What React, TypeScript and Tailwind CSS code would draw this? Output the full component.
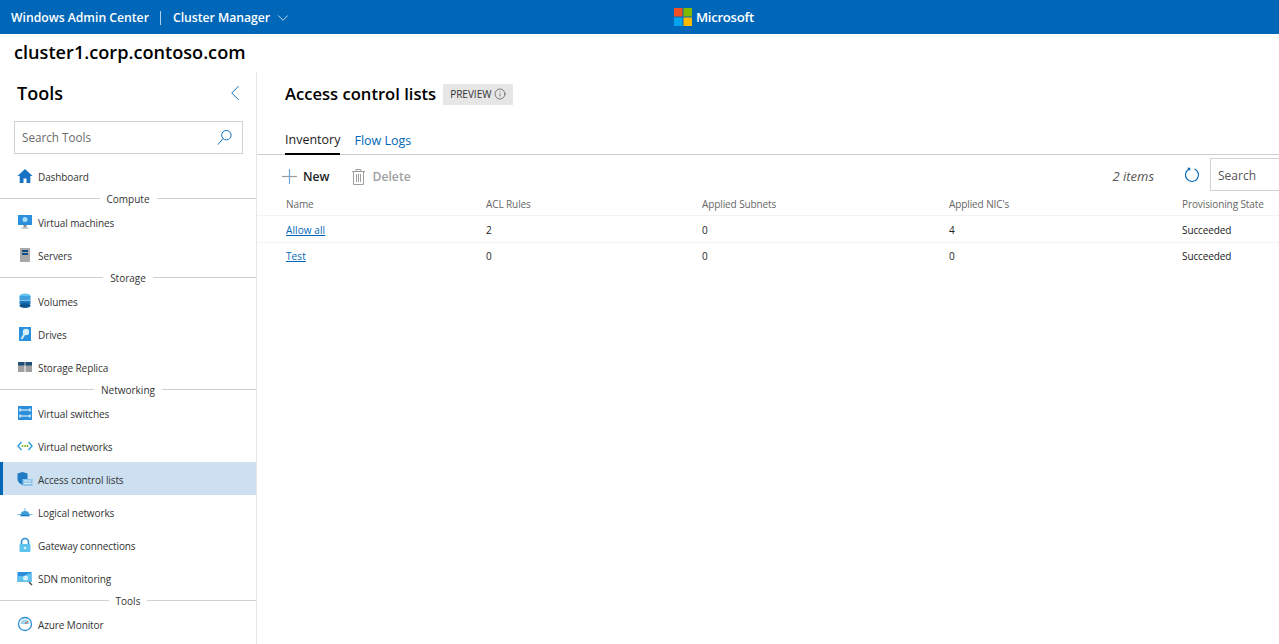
import React from 'react';
import { ChevronDown, ChevronLeft, Info } from 'lucide-react';

function HomeIcon() {
  return (
    <svg viewBox="0 0 16 16" className="w-[16px] h-[16px]">
      <path d="M8 1 0.500 8h2.200v7h3.800v-4.500h3V15h3.800V8h2.200z" fill="#1773c4" />
    </svg>
  );
}

function VmIcon() {
  return (
    <svg viewBox="0 0 16 16" className="w-[16px] h-[16px]">
      <rect x="1" y="1" width="14" height="10" fill="#2a8fdc" />
      <circle cx="8" cy="5.500" r="2.500" fill="#a9def5" />
      <rect x="6.500" y="11" width="3" height="2.500" fill="#8c8c8c" />
      <rect x="4.500" y="13.500" width="7" height="1.200" fill="#b5b5b5" />
    </svg>
  );
}

function ServerIcon() {
  return (
    <svg viewBox="0 0 16 16" className="w-[16px] h-[16px]">
      <rect x="3" y="1" width="10" height="14" fill="#a8a8a8" />
      <rect x="5" y="3" width="6" height="2" fill="#0b4f86" />
      <rect x="5" y="6" width="6" height="2" fill="#0b4f86" />
    </svg>
  );
}

function VolumeIcon() {
  return (
    <svg viewBox="0 0 16 16" className="w-[16px] h-[16px]">
      <ellipse cx="8" cy="3" rx="5.500" ry="2.500" fill="#62c2ee" />
      <rect x="2.500" y="3" width="11" height="4" fill="#3ea3e0" />
      <rect x="2.500" y="7.500" width="11" height="3.500" fill="#1a7ac0" />
      <ellipse cx="8" cy="12.500" rx="5.500" ry="2.500" fill="#0c568f" />
    </svg>
  );
}

function DriveIcon() {
  return (
    <svg viewBox="0 0 16 16" className="w-[16px] h-[16px]">
      <rect x="2" y="1" width="12" height="14" fill="#2a8fdc" />
      <circle cx="9" cy="6" r="3.200" fill="#d4eefa" />
      <path d="M7.500 8 4.500 13" stroke="#d4eefa" strokeWidth="2" />
    </svg>
  );
}

function ReplicaIcon() {
  return (
    <svg viewBox="0 0 16 16" className="w-[16px] h-[16px]">
      <rect x="1" y="3" width="6.500" height="10" fill="#a0a0a0" />
      <rect x="8.500" y="3" width="6.500" height="10" fill="#a0a0a0" />
      <rect x="1" y="3" width="6.500" height="3.500" fill="#1f4e79" />
      <rect x="8.500" y="3" width="6.500" height="3.500" fill="#1f4e79" />
    </svg>
  );
}

function SwitchIcon() {
  return (
    <svg viewBox="0 0 16 16" className="w-[16px] h-[16px]">
      <rect x="1" y="1" width="14" height="14" fill="#2a8fdc" />
      <path d="M3 5h10M3 11h10M3 3.500v3M13 3.500v3M3 9.500v3M13 9.500v3" stroke="#fff" strokeWidth="1.200" />
    </svg>
  );
}

function VnetIcon() {
  return (
    <svg viewBox="0 0 16 16" className="w-[16px] h-[16px]" fill="none">
      <path d="M4.500 4 1 8l3.500 4" stroke="#2d9fd9" strokeWidth="1.400" />
      <path d="M11.500 4 15 8l-3.500 4" stroke="#2d9fd9" strokeWidth="1.400" />
      <circle cx="5.500" cy="8" r="0.900" fill="#6bb400" />
      <circle cx="8" cy="8" r="0.900" fill="#6bb400" />
      <circle cx="10.500" cy="8" r="0.900" fill="#6bb400" />
    </svg>
  );
}

function AclIcon() {
  return (
    <svg viewBox="0 0 16 16" className="w-[16px] h-[16px]">
      <path d="M0.500 2.500 5.500 1l5 1.500V8c0 3-2.500 5-5 6-2.500-1-5-3-5-6z" fill="#1f7cc4" />
      <rect x="5.500" y="8" width="10" height="7" fill="#8fc3ea" />
      <path d="M7 10h7M7 12.500h7" stroke="#e3f1fb" strokeWidth="0.900" />
    </svg>
  );
}

function LogicalIcon() {
  return (
    <svg viewBox="0 0 16 16" className="w-[16px] h-[16px]">
      <path d="M0.500 10.500h15" stroke="#64b5e3" strokeWidth="0.900" />
      <path d="M4 10a4 3 0 0 1 8 0z" fill="#3a9fda" />
      <rect x="3.500" y="10.500" width="9" height="1.800" fill="#1a7ac0" />
      <path d="M8 4v3" stroke="#64b5e3" strokeWidth="1" />
    </svg>
  );
}

function GatewayIcon() {
  return (
    <svg viewBox="0 0 16 16" className="w-[16px] h-[16px]">
      <path d="M4.500 8V5a3.500 3.500 0 0 1 7 0v3" fill="none" stroke="#2a8fdc" strokeWidth="1.600" />
      <rect x="2.500" y="7" width="11" height="8" rx="1" fill="#5cc3ee" />
      <circle cx="8" cy="11" r="1.300" fill="#d9f1fb" />
    </svg>
  );
}

function MonitorIcon() {
  return (
    <svg viewBox="0 0 16 16" className="w-[16px] h-[16px]">
      <rect x="0.500" y="2" width="14" height="10" fill="#2a8fdc" />
      <path d="M0.500 7c3-3 6 1 9-2s3-1 5-1v8H0.500z" fill="#62c2ee" />
      <circle cx="8.500" cy="8" r="2.500" fill="#d9f1fb" />
      <path d="m12 12 3 3" stroke="#3c3c3c" strokeWidth="1.200" />
    </svg>
  );
}

function AzureMonitorIcon() {
  return (
    <svg viewBox="0 0 16 16" className="w-[16px] h-[16px]" fill="none">
      <circle cx="8" cy="8" r="6.500" stroke="#2b8fd4" strokeWidth="1.300" />
      <path d="M3.500 8a4.500 4.500 0 0 1 9 0z" fill="#9bd3f0" />
      <path d="m8 8 3-2.500" stroke="#c0392b" strokeWidth="1" />
    </svg>
  );
}

function MsLogo() {
  return (
    <svg viewBox="0 0 18 18" className="w-[18px] h-[18px]">
      <rect width="8.500" height="8.500" fill="#f25022" />
      <rect x="9.500" width="8.500" height="8.500" fill="#7fba00" />
      <rect y="9.500" width="8.500" height="8.500" fill="#00a4ef" />
      <rect x="9.500" y="9.500" width="8.500" height="8.500" fill="#ffb900" />
    </svg>
  );
}

function SearchGlass() {
  return (
    <svg viewBox="0 0 16 18" className="w-[15px] h-[17px]" fill="none" stroke="#0067b8" strokeWidth="1">
      <circle cx="10" cy="6.500" r="5" />
      <path d="M6.500 10 1 16.500" />
    </svg>
  );
}

function PlusThin() {
  return (
    <svg viewBox="0 0 15 15" className="w-[15px] h-[15px]" fill="none" strokeWidth="1.200">
      <path d="M0 7.500h15" stroke="#9a9a9a" />
      <path d="M7.500 0v15" stroke="#6ea6d8" />
    </svg>
  );
}

function TrashThin() {
  return (
    <svg viewBox="0 0 13 16" className="w-[13px] h-[16px]" fill="none" stroke="#9e9e9e" strokeWidth="1">
      <path d="M0 2.500h13M4 2.500V.5h5v2M1.500 2.500v13h10v-13M4.500 5v8M6.500 5v8M8.500 5v8" />
    </svg>
  );
}

function RefreshThin() {
  return (
    <svg viewBox="0 0 16 16" className="w-[16px] h-[16px]" fill="none" stroke="#0067b8" strokeWidth="1.100">
      <path d="M5 2.200A6.500 6.500 0 1 0 10.500 2" />
      <path d="M3 .8h3.200V4z" fill="#0067b8" stroke="none" />
    </svg>
  );
}

type NavEntry = { section: string } | { label: string; icon: React.ReactNode; active?: boolean };

const navItems: NavEntry[] = [
  { label: 'Dashboard', icon: <HomeIcon /> },
  { section: 'Compute' },
  { label: 'Virtual machines', icon: <VmIcon /> },
  { label: 'Servers', icon: <ServerIcon /> },
  { section: 'Storage' },
  { label: 'Volumes', icon: <VolumeIcon /> },
  { label: 'Drives', icon: <DriveIcon /> },
  { label: 'Storage Replica', icon: <ReplicaIcon /> },
  { section: 'Networking' },
  { label: 'Virtual switches', icon: <SwitchIcon /> },
  { label: 'Virtual networks', icon: <VnetIcon /> },
  { label: 'Access control lists', icon: <AclIcon />, active: true },
  { label: 'Logical networks', icon: <LogicalIcon /> },
  { label: 'Gateway connections', icon: <GatewayIcon /> },
  { label: 'SDN monitoring', icon: <MonitorIcon /> },
  { section: 'Tools' },
  { label: 'Azure Monitor', icon: <AzureMonitorIcon /> },
];

const rows = [
  { name: 'Allow all', rules: '2', subnets: '0', nics: '4', state: 'Succeeded' },
  { name: 'Test', rules: '0', subnets: '0', nics: '0', state: 'Succeeded' },
];

const columns = 'grid grid-cols-[200px_216px_247px_233px_100px] pl-[29px] items-center text-[10px] tracking-[-0.1px]';

export default function App() {
  return (
    <div className="h-screen flex flex-col overflow-hidden bg-white text-[#1b1b1b] font-['Open_Sans',sans-serif]">
      <header className="h-[34px] shrink-0 bg-[#0067b8] text-white grid grid-cols-[674px_auto] items-center">
        <div className="flex items-center pl-[11px] pt-[2px] text-[12.200px] font-semibold">
          <span>Windows Admin Center</span>
          <span className="w-px h-[14px] bg-white/70 ml-[11px] mr-[12px]" />
          <span>Cluster Manager</span>
          <ChevronDown className="w-[18px] h-[18px] ml-[4px]" strokeWidth={1} />
        </div>
        <div className="flex items-center gap-[4px]">
          <MsLogo />
          <span className="pt-[2px] text-[13.200px] font-semibold tracking-[-0.3px]">Microsoft</span>
        </div>
      </header>

      <div className="h-[37px] mb-[1px] shrink-0 flex items-center pl-[14px] text-[18.150px] font-semibold text-black">
        cluster1.corp.contoso.com
      </div>

      <div className="flex flex-1 min-h-0">
        <aside className="w-[257px] shrink-0 border-r border-[#e6e6e6] flex flex-col">
          <div className="h-[42px] flex items-center justify-between pl-[17px] pr-[8px]">
            <h2 className="text-[18px] font-semibold text-black">Tools</h2>
            <ChevronLeft className="w-[26px] h-[26px] text-[#0067b8]" strokeWidth={0.900} />
          </div>
          <div className="mt-[7px] ml-[14px] mr-[13px] h-[33px] border border-[#d2d2d2] flex items-center justify-between pl-[7px] pr-[10px]">
            <span className="text-[11.700px] text-[#6b6b6b]">Search Tools</span>
            <SearchGlass />
          </div>
          <nav className="mt-[5px]">
            {navItems.map((item) =>
              'section' in item ? (
                <div key={item.section} className="h-[13px] flex items-center gap-[7px]">
                  <span className="flex-1 h-px bg-[#d0d0d0]" />
                  <span className="pt-[2px] text-[10px] text-[#333]">{item.section}</span>
                  <span className="flex-1 h-px bg-[#d0d0d0]" />
                </div>
              ) : (
                <div
                  key={item.label}
                  className={
                    item.active
                      ? 'h-[33px] flex items-center gap-[5px] pl-[14px] border-l-[3px] border-[#0067b8] bg-[#cce0f1] text-[10px] tracking-[-0.1px] text-[#333]'
                      : 'h-[33px] flex items-center gap-[5px] pl-[17px] text-[10px] tracking-[-0.1px] text-[#333]'
                  }
                >
                  {item.icon}
                  <span className="pt-[4px]">{item.label}</span>
                </div>
              )
            )}
          </nav>
        </aside>

        <main className="flex-1 min-w-0 overflow-hidden">
          <div className="h-[44px] flex items-center gap-[7px] pl-[28px]">
            <h1 className="text-[16.600px] font-semibold text-black">Access control lists</h1>
            <span className="h-[21px] px-[7px] flex items-center gap-[3px] bg-[#e6e6e6] text-[10px] text-[#333]">
              PREVIEW
              <Info className="w-[12px] h-[12px]" strokeWidth={1.200} />
            </span>
          </div>

          <div className="h-[39px] flex items-end gap-[14px] pl-[28px] border-b border-[#cfcfcf]">
            <div className="h-[27px] flex items-center border-b-2 border-black text-[12.500px] text-[#1b1b1b] -mb-px">Inventory</div>
            <div className="h-[27px] pb-[1px] flex items-center text-[12.500px] text-[#0067b8] -mb-px">Flow Logs</div>
          </div>

          <div className="h-[36px] flex items-center pl-[25px]">
            <div className="flex items-center mt-[8px]">
              <PlusThin />
              <span className="ml-[6px] text-[12.200px] font-semibold text-[#222]">New</span>
              <span className="ml-[22px]"><TrashThin /></span>
              <span className="ml-[8px] text-[12.200px] font-semibold text-[#a0a0a0]">Delete</span>
            </div>
            <span className="ml-auto mt-[8px] text-[13px] italic text-[#555]">2 items</span>
            <span className="ml-[30px] mt-[4px]"><RefreshThin /></span>
            <div className="ml-[10px] mt-[2px] w-[80px] h-[33px] -mr-[11px] border border-[#d2d2d2] flex items-center pl-[7px] pt-[3px] text-[12px] text-[#555] shrink-0">
              Search
            </div>
          </div>

          <div className={`${columns} h-[25px] pt-[2px] text-[#666] border-b border-[#f3f3f3]`}>
            <span>Name</span>
            <span>ACL Rules</span>
            <span>Applied Subnets</span>
            <span>Applied NIC's</span>
            <span className="whitespace-nowrap">Provisioning State</span>
          </div>
          {rows.map((row, i) => (
            <div
              key={row.name}
              className={i === 0 ? `${columns} h-[27px] pt-[2px] text-[#222] border-b border-[#f3f3f3]` : `${columns} h-[26px] text-[#222]`}
            >
              <a className="text-[#0067b8] underline tracking-[0.1px]">{row.name}</a>
              <span>{row.rules}</span>
              <span>{row.subnets}</span>
              <span>{row.nics}</span>
              <span>{row.state}</span>
            </div>
          ))}
        </main>
      </div>
    </div>
  );
}
